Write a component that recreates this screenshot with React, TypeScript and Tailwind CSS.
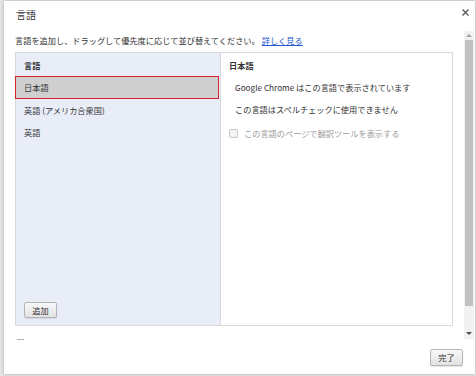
const font = { fontFamily: '"Noto Sans CJK JP", "Noto Sans", sans-serif' }

const languages = ['日本語', '英語 (アメリカ合衆国)', '英語']

function Scrollbar() {
  return (
    <div className="mr-[1px] flex w-[10px] flex-col items-center bg-[#f1f1f1]">
      <div className="flex h-[9px] items-center justify-center">
        <div className="h-0 w-0 border-x-[3px] border-b-[3px] border-x-transparent border-b-[#a3a3a3]" />
      </div>
      <div className="h-[266px] w-[8px] bg-[#c1c1c1]" />
      <div className="flex-1" />
      <div className="flex h-[12px] items-center justify-center">
        <div className="h-0 w-0 border-x-[3px] border-t-[3px] border-x-transparent border-t-[#505050]" />
      </div>
    </div>
  )
}

export default function App() {
  return (
    <div
      className="h-[376px] w-[476px] bg-[#e4e4e4] pb-[2px] pl-[4px] pr-[1px] pt-[1px] text-[#333]"
      style={font}
    >
      <div className="relative flex h-full flex-col bg-white shadow-[0_0_3px_rgba(0,0,0,0.25)]">
        <svg className="absolute right-[6px] top-[8px]" width="7" height="7" viewBox="0 0 7 7">
          <path d="M0.5 0.5 L6.5 6.5 M6.5 0.5 L0.5 6.5" stroke="#5a5a5a" strokeWidth="1.4" />
        </svg>
        <div className="h-[30px] pl-[12px] pt-[7px] text-[10px] leading-[14px]">言語</div>

        <div className="flex h-[308px]">
          <div className="flex flex-1 flex-col pl-[11px] pr-[11px]">
            <div className="mt-[3px] text-[8.2px] leading-[12px]">
              言語を追加し、ドラッグして優先度に応じて並び替えてください。
              <span className="ml-[2px] text-[#1b56d3] underline">詳しく見る</span>
            </div>
            <div className="mt-[6px] flex h-[274px] border border-[#d9d9d9] text-[8.2px]">
              <div className="flex w-[205px] flex-col border-r border-[#d9d9d9] bg-[#e9edf8]">
                <div className="h-[23px] pl-[8px] pt-[6px] font-bold leading-[12px]">言語</div>
                {languages.map((name, i) =>
                  i === 0 ? (
                    <div
                      key={i}
                      className="-ml-px flex h-[23px] w-[204px] items-center border border-[#d9232b] bg-[#cfcfcf] pl-[8px]"
                    >
                      {name}
                    </div>
                  ) : (
                    <div key={i} className="flex h-[22px] items-center pl-[8px]">
                      {name}
                    </div>
                  )
                )}
                <div className="flex-1" />
                <button className="mb-[7px] ml-[8px] h-[16px] w-[33px] rounded-[2px] border border-[#b4b4b4] bg-gradient-to-b from-[#f8f8f8] to-[#e2e2e2] text-[8.2px] leading-none shadow-[0_1px_1px_rgba(0,0,0,0.1)]">
                  追加
                </button>
              </div>
              <div className="flex flex-1 flex-col pl-[8px]">
                <div className="h-[23px] pt-[6px] font-bold leading-[12px]">日本語</div>
                <div className="flex h-[22px] items-center pl-[6px]">Google Chrome はこの言語で表示されています</div>
                <div className="flex h-[22px] items-center pl-[6px]">この言語はスペルチェックに使用できません</div>
                <div className="flex h-[26px] items-center text-[#9a9a9a]">
                  <div className="h-[9px] w-[9px] rounded-[2px] border border-[#c8c8c8] bg-[#f4f4f4]" />
                  <span className="ml-[6px]">この言語のページで翻訳ツールを表示する</span>
                </div>
              </div>
            </div>
          </div>
          <Scrollbar />
        </div>

        <div className="flex flex-1 flex-col">
          <div className="ml-[13px] h-px w-[7px] bg-[#b0b0b0]" />
          <button className="mr-[12px] mt-[9px] h-[17px] w-[33px] self-end rounded-[2px] border border-[#b4b4b4] bg-gradient-to-b from-[#f8f8f8] to-[#e2e2e2] text-[8.2px] leading-none shadow-[0_1px_1px_rgba(0,0,0,0.1)]">
            完了
          </button>
        </div>
      </div>
    </div>
  )
}
